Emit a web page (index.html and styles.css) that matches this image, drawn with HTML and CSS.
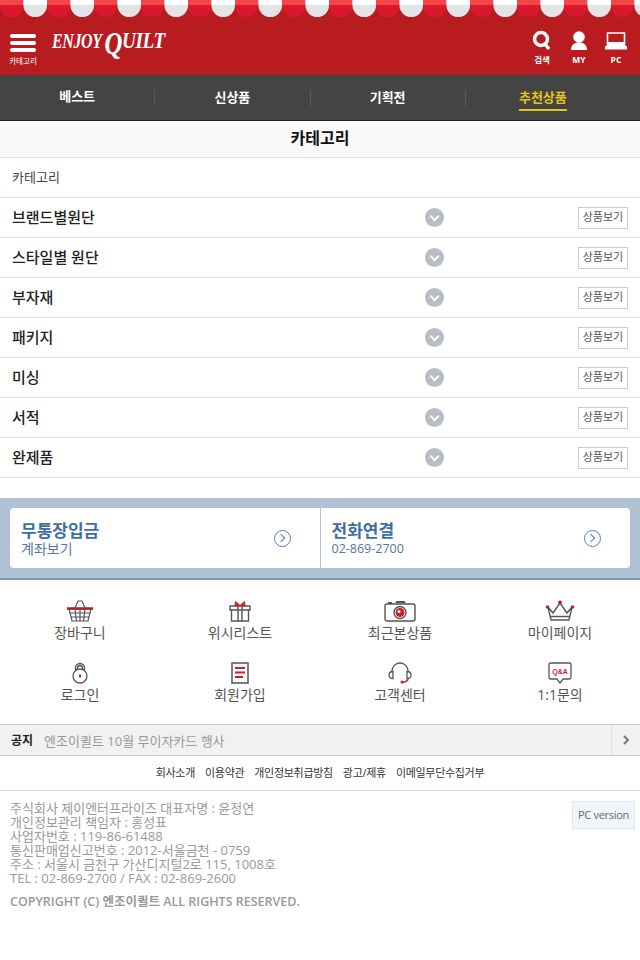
FILE: index.html
```html
<!DOCTYPE html>
<html lang="ko">
<head>
  <meta charset="UTF-8" />
  <meta name="viewport" content="width=device-width, initial-scale=1.0" />
  <title>Enjoy Quilt - 카테고리</title>
  <link rel="stylesheet" href="styles.css">
</head>
<body>
  <header class="top">
    <svg class="awning" width="640" height="17" viewBox="0 0 640 17">
      <defs>
        <pattern id="stripes" width="47" height="17" patternUnits="userSpaceOnUse">
          <path d="M0 0h23.5v5.500a11.750 11.500 0 0 1-23.500 0z" fill="#d9182b"/>
          <rect width="23.500" height="5" fill="#f44648"/>
          <path d="M23.500 0h23.500v5.500a11.750 11.500 0 0 1-23.500 0z" fill="#e4e4e6"/>
          <rect x="23.500" width="23.500" height="5" fill="#fff"/>
        </pattern>
      </defs>
      <rect width="640" height="17" fill="url(#stripes)"/>
    </svg>
    <div class="top-bar">
      <a class="menu-btn">
        <span class="bars"><i></i><i></i><i></i></span>
        <span class="top-label">카테고리</span>
      </a>
      <a class="logo">ENJOY <b>Q</b><em>UILT</em></a>
      <div class="top-icons">
        <a class="top-icon">
          <svg width="20" height="24" viewBox="0 0 20 24"><circle cx="9" cy="10" r="6.500" fill="none" stroke="#fff" stroke-width="3.500"/><path d="M13 15l4 5" stroke="#fff" stroke-width="3.500"/></svg>
          <span class="top-label">검색</span>
        </a>
        <a class="top-icon">
          <svg width="20" height="24" viewBox="0 0 20 24"><circle cx="10" cy="8" r="5.800" fill="#fff"/><path d="M2 21c0-5 3-7.500 8-7.500s8 2.500 8 7.500z" fill="#fff"/></svg>
          <span class="top-label">MY</span>
        </a>
        <a class="top-icon">
          <svg width="22" height="24" viewBox="0 0 22 24"><path d="M2.500 4h17v13h-17z" fill="none" stroke="#fff" stroke-width="1.600"/><path d="M3 13h16v4H3zM0 17h22v3.500H0z" fill="#fff"/></svg>
          <span class="top-label">PC</span>
        </a>
      </div>
    </div>
  </header>

  <nav class="gnb">
    <a class="gnb-item"><span>베스트</span></a>
    <a class="gnb-item"><span>신상품</span></a>
    <a class="gnb-item"><span>기획전</span></a>
    <a class="gnb-item active"><span>추천상품</span></a>
  </nav>

  <h1 class="page-title">카테고리</h1>

  <div class="crumb">카테고리</div>
  <ul class="cat-list">
    <li><strong>브랜드별원단</strong><i class="chev"></i><a class="view-btn">상품보기</a></li>
    <li><strong>스타일별 원단</strong><i class="chev"></i><a class="view-btn">상품보기</a></li>
    <li><strong>부자재</strong><i class="chev"></i><a class="view-btn">상품보기</a></li>
    <li><strong>패키지</strong><i class="chev"></i><a class="view-btn">상품보기</a></li>
    <li><strong>미싱</strong><i class="chev"></i><a class="view-btn">상품보기</a></li>
    <li><strong>서적</strong><i class="chev"></i><a class="view-btn">상품보기</a></li>
    <li><strong>완제품</strong><i class="chev"></i><a class="view-btn">상품보기</a></li>
  </ul>

  <section class="contact">
    <div class="contact-card">
      <a class="contact-item">
        <span class="contact-text"><b>무통장입금</b><small>계좌보기</small></span>
        <i class="go"></i>
      </a>
      <a class="contact-item">
        <span class="contact-text"><b>전화연결</b><small class="tel">02-869-2700</small></span>
        <i class="go"></i>
      </a>
    </div>
  </section>

  <section class="shortcuts">
    <a class="shortcut">
      <svg width="28" height="22" viewBox="0 0 28 22" fill="none" stroke="#555" stroke-width="1.200"><path d="M9 8l3-7M19 8l-3-7M12 1h4"/><path d="M3 9l3 12h16l3-12zM9 9l1.500 12M14 9v12M19 9l-1.500 12M4 13h20M5 17h18"/><path d="M1 8.500h26" stroke="#b81c21" stroke-width="2.500"/></svg>
      <span>장바구니</span>
    </a>
    <a class="shortcut">
      <svg width="24" height="22" viewBox="0 0 24 22" fill="none" stroke="#555" stroke-width="1.400"><path d="M2 6h20v4H2zM3.500 10h17v11h-17zM10 6v15M14 6v15"/><path d="M12 5.500L7.500 1.500 7 5.500zM12 5.500l4.500-4 .5 4z" fill="#c9202c" stroke="#c9202c" stroke-width="1"/></svg>
      <span>위시리스트</span>
    </a>
    <a class="shortcut">
      <svg width="32" height="22" viewBox="0 0 32 22" fill="none" stroke="#555" stroke-width="1.400"><path d="M3 4h26a2 2 0 0 1 2 2v13a2 2 0 0 1-2 2H3a2 2 0 0 1-2-2V6a2 2 0 0 1 2-2z"/><path d="M4 3h4M12 3l1-1h7l1 1" stroke-width="2"/><circle cx="16" cy="12.500" r="6"/><circle cx="16" cy="12.500" r="4.500" fill="#c9202c" stroke="none"/><circle cx="15" cy="11.500" r="1.500" fill="#fff" stroke="none"/></svg>
      <span>최근본상품</span>
    </a>
    <a class="shortcut">
      <svg width="30" height="22" viewBox="0 0 30 22" fill="none" stroke="#555" stroke-width="1.400"><path d="M3 7l5 6 7-10 7 10 5-6-3 13H6zM6 16.500h18"/><circle cx="15" cy="2.500" r="2" fill="#c9202c" stroke="none"/><circle cx="2.500" cy="7" r="1.800" fill="#c9202c" stroke="none"/><circle cx="27.500" cy="7" r="1.800" fill="#c9202c" stroke="none"/></svg>
      <span>마이페이지</span>
    </a>
    <a class="shortcut">
      <svg width="18" height="22" viewBox="0 0 18 22" fill="none" stroke="#555" stroke-width="1.300"><path d="M4.500 8V6a4.500 4.500 0 0 1 9 0v2M6.500 8V6a2.500 2.500 0 0 1 5 0v2"/><circle cx="9" cy="14" r="7"/><path d="M9 12.500v3" stroke="#c9202c" stroke-width="2"/></svg>
      <span>로그인</span>
    </a>
    <a class="shortcut">
      <svg width="18" height="22" viewBox="0 0 18 22" fill="none" stroke="#555" stroke-width="1.500"><path d="M1 1h16v20H1z"/><path d="M4 6h10M4 10.500h10M4 15h8" stroke="#c9202c" stroke-width="2"/></svg>
      <span>회원가입</span>
    </a>
    <a class="shortcut">
      <svg width="24" height="22" viewBox="0 0 24 22" fill="none" stroke="#555" stroke-width="1.300"><path d="M4 10V9a8 8 0 0 1 16 0v1"/><path d="M5 9.500v7C2.500 16.500 1 15.500 1 13s1.500-3.500 4-3.500zM19 9.500v7c2.500 0 4-1 4-3.500s-1.500-3.500-4-3.500z"/><path d="M20 16.500c0 2-2 3.500-5 3.800" stroke="#c9202c" stroke-width="1.500"/><circle cx="14" cy="20" r="1.500" fill="#c9202c" stroke="none"/></svg>
      <span>고객센터</span>
    </a>
    <a class="shortcut">
      <svg width="24" height="22" viewBox="0 0 24 22"><path d="M2.500 1h19a1.500 1.500 0 0 1 1.500 1.500v13a1.500 1.500 0 0 1-1.500 1.500H15l-3 4-3-4H2.500A1.500 1.500 0 0 1 1 15.500v-13A1.500 1.500 0 0 1 2.500 1z" fill="none" stroke="#555" stroke-width="1.300"/><text x="12" y="11.500" text-anchor="middle" class="qna">Q&amp;A</text></svg>
      <span>1:1문의</span>
    </a>
  </section>

  <div class="notice">
    <strong>공지</strong>
    <span class="notice-text">엔조이퀼트 10월 무이자카드 행사</span>
    <a class="notice-more"><svg width="7" height="10" viewBox="0 0 7 10"><path d="M1 1l4 4-4 4" fill="none" stroke="#777" stroke-width="2"/></svg></a>
  </div>

  <div class="foot-links">
    <a>회사소개</a>
    <a>이용약관</a>
    <a>개인정보취급방침</a>
    <a>광고/제휴</a>
    <a>이메일무단수집거부</a>
  </div>

  <footer class="foot">
    <a class="pc-btn">PC version</a>
    <p class="foot-info">주식회사 제이엔터프라이즈 대표자명 : 윤정연<br>개인정보관리 책임자 : 홍성표<br>사업자번호 : 119-86-61488<br>통신판매업신고번호 : 2012-서울금천 - 0759<br>주소 : 서울시 금천구 가산디지털2로 115, 1008호<br>TEL : 02-869-2700 / FAX : 02-869-2600</p>
    <p class="foot-copy">COPYRIGHT (C) 엔조이퀼트 ALL RIGHTS RESERVED.</p>
  </footer>
</body>
</html>
```

FILE: styles.css
```css
body {
  margin: 0;
  background: #fff;
  font-family: "Open Sans", "Noto Sans CJK KR", sans-serif;
  color: #333;
  min-height: 960px;
}

/* header */
.top {
  background: #b81c21;
  height: 75px;
}

.awning {
  display: block;
}

.top-bar {
  display: flex;
  align-items: flex-start;
  padding: 0 12px 0 10px;
  height: 58px;
}

.menu-btn {
  display: flex;
  flex-direction: column;
  align-items: center;
  width: 26px;
  padding-top: 17px;
}

.bars {
  display: flex;
  flex-direction: column;
  gap: 3px;
  width: 26px;
  margin-bottom: 3px;
}

.bars i {
  display: block;
  height: 4px;
  border-radius: 2px;
  background: #fff;
}

.top-label {
  color: #fff;
  font-size: 7.500px;
  line-height: 12px;
  white-space: nowrap;
}

.logo {
  display: inline-block;
  margin: 6px 0 0 16px;
  color: #fff;
  font-family: "Liberation Serif", serif;
  font-style: italic;
  font-weight: 700;
  font-size: 20px;
  line-height: 34px;
  letter-spacing: -0.5px;
  white-space: nowrap;
  transform: scaleX(0.8);
  transform-origin: left center;
}

.logo b {
  font-size: 31px;
  line-height: 0;
  vertical-align: -6px;
}

.logo em {
  font-size: 24px;
}

.top-icons {
  display: flex;
  margin-left: auto;
  gap: 13px;
  padding-top: 12px;
}

.top-icon {
  display: flex;
  flex-direction: column;
  align-items: center;
  width: 24px;
}

.top-icon svg {
  display: block;
  margin-bottom: 1px;
}

.top-icon .top-label {
  font-size: 8.500px;
  font-weight: 700;
}

/* nav */
.gnb {
  display: flex;
  height: 45px;
  padding-right: 20px;
  background: #444;
  border-bottom: 1px solid #222;
}

.gnb-item {
  position: relative;
  display: flex;
  flex: 1;
  justify-content: center;
  padding-top: 11px;
  color: #fff;
  font-size: 13px;
  font-weight: 700;
}

.gnb-item span {
  height: 22px;
  line-height: 20px;
}

.gnb-item + .gnb-item {
  border-left: 1px solid #5a5a5a;
  margin: 15px 0 14px;
  padding-top: 0;
  align-items: center;
}

.gnb-item.active {
  color: #e6c414;
}

.gnb-item.active span {
  height: 21px;
  margin-top: 3px;
  border-bottom: 2px solid #e6c414;
  line-height: 19px;
}

.page-title {
  margin: 0;
  height: 36px;
  background: #f9f9f9;
  border-bottom: 1px solid #ddd;
  text-align: center;
  color: #111;
  font-size: 16px;
  font-weight: 700;
  line-height: 35px;
}

.crumb {
  height: 39px;
  padding-left: 12px;
  border-bottom: 1px solid #ddd;
  color: #444;
  font-size: 13px;
  line-height: 39px;
}

/* category rows */
.cat-list {
  margin: 0;
  padding: 0;
  list-style: none;
}

.cat-list li {
  display: flex;
  align-items: center;
  height: 39px;
  padding: 0 12px;
  border-bottom: 1px solid #ddd;
}

.cat-list strong {
  width: 413px;
  padding-bottom: 3px;
  color: #222;
  font-size: 15px;
  font-weight: 500;
}

.chev {
  position: relative;
  width: 19px;
  height: 19px;
  border-radius: 50%;
  background: #b7bdc5;
}

.chev::after {
  content: "";
  position: absolute;
  left: 6px;
  top: 5px;
  width: 5px;
  height: 5px;
  border-right: 2px solid #fff;
  border-bottom: 2px solid #fff;
  transform: rotate(45deg);
}

.view-btn {
  margin-left: auto;
  width: 48px;
  height: 20px;
  border: 1px solid #ccc;
  text-align: center;
  color: #555;
  font-size: 11px;
  line-height: 18px;
}

/* contact box */
.contact {
  margin-top: 20px;
  padding: 10px 10px 10px;
  background: #afc1d3;
  border-bottom: 2px solid #7c9aba;
}

.contact-card {
  display: flex;
  height: 60px;
  background: #fff;
  border-radius: 4px;
}

.contact-item {
  display: flex;
  flex: 1;
  align-items: center;
  padding: 0 29px 0 11px;
}

.contact-item + .contact-item {
  border-left: 1px solid #afc1d3;
}

.contact-text {
  display: flex;
  flex-direction: column;
}

.contact-text b {
  color: #3d6ea5;
  font-size: 17px;
  font-weight: 700;
  line-height: 20px;
}

.contact-text small {
  color: #55779c;
  font-size: 14px;
  line-height: 15px;
}

.contact-text .tel {
  font-size: 12.500px;
}

.go {
  position: relative;
  margin-left: auto;
  width: 15px;
  height: 15px;
  border: 1.500px solid #4f82b8;
  border-radius: 50%;
}

.go::after {
  content: "";
  position: absolute;
  left: 3px;
  top: 4px;
  width: 5px;
  height: 5px;
  border-top: 1.500px solid #4f82b8;
  border-right: 1.500px solid #4f82b8;
  transform: rotate(45deg);
}

/* shortcut grid */
.shortcuts {
  display: grid;
  grid-template-columns: repeat(4, 1fr);
  grid-auto-rows: 62px;
  padding-top: 20px;
  border-bottom: 1px solid #ccc;
}

.shortcut {
  display: flex;
  flex-direction: column;
  align-items: center;
  color: #555;
  font-size: 14px;
  line-height: 18px;
}

.shortcut svg {
  display: block;
  margin-bottom: 2px;
}

.qna {
  fill: #c9202c;
  font-family: "Liberation Sans", sans-serif;
  font-size: 7px;
  font-weight: 700;
}

/* notice */
.notice {
  display: flex;
  align-items: center;
  height: 30px;
  padding-left: 11px;
  background: #f1f1f1;
  border-bottom: 1px solid #ccc;
  font-size: 13px;
}

.notice strong {
  color: #222;
  font-size: 12px;
  font-weight: 700;
}

.notice-text {
  margin-left: 11px;
  color: #999;
}

.notice-more {
  display: flex;
  align-items: center;
  justify-content: center;
  margin-left: auto;
  width: 28px;
  height: 100%;
  border-left: 1px solid #ddd;
}

.foot-links {
  display: flex;
  justify-content: center;
  gap: 10px;
  height: 34px;
  border-bottom: 1px solid #ddd;
  color: #333;
  font-size: 11px;
  line-height: 34px;
  letter-spacing: -0.3px;
}

/* footer */
.foot {
  padding: 10px 5px 0 10px;
}

.pc-btn {
  float: right;
  width: 61px;
  height: 26px;
  background: #f2f5f9;
  border: 1px solid #e2e7ee;
  text-align: center;
  color: #667;
  font-size: 11px;
  line-height: 25px;
  letter-spacing: -0.3px;
}

.foot p {
  margin: 0;
  color: #999;
}

.foot-info {
  font-size: 13px;
  line-height: 14px;
}

.foot .foot-copy {
  margin-top: 10px;
  font-size: 12.500px;
  font-weight: 600;
  line-height: 14px;
}
```
